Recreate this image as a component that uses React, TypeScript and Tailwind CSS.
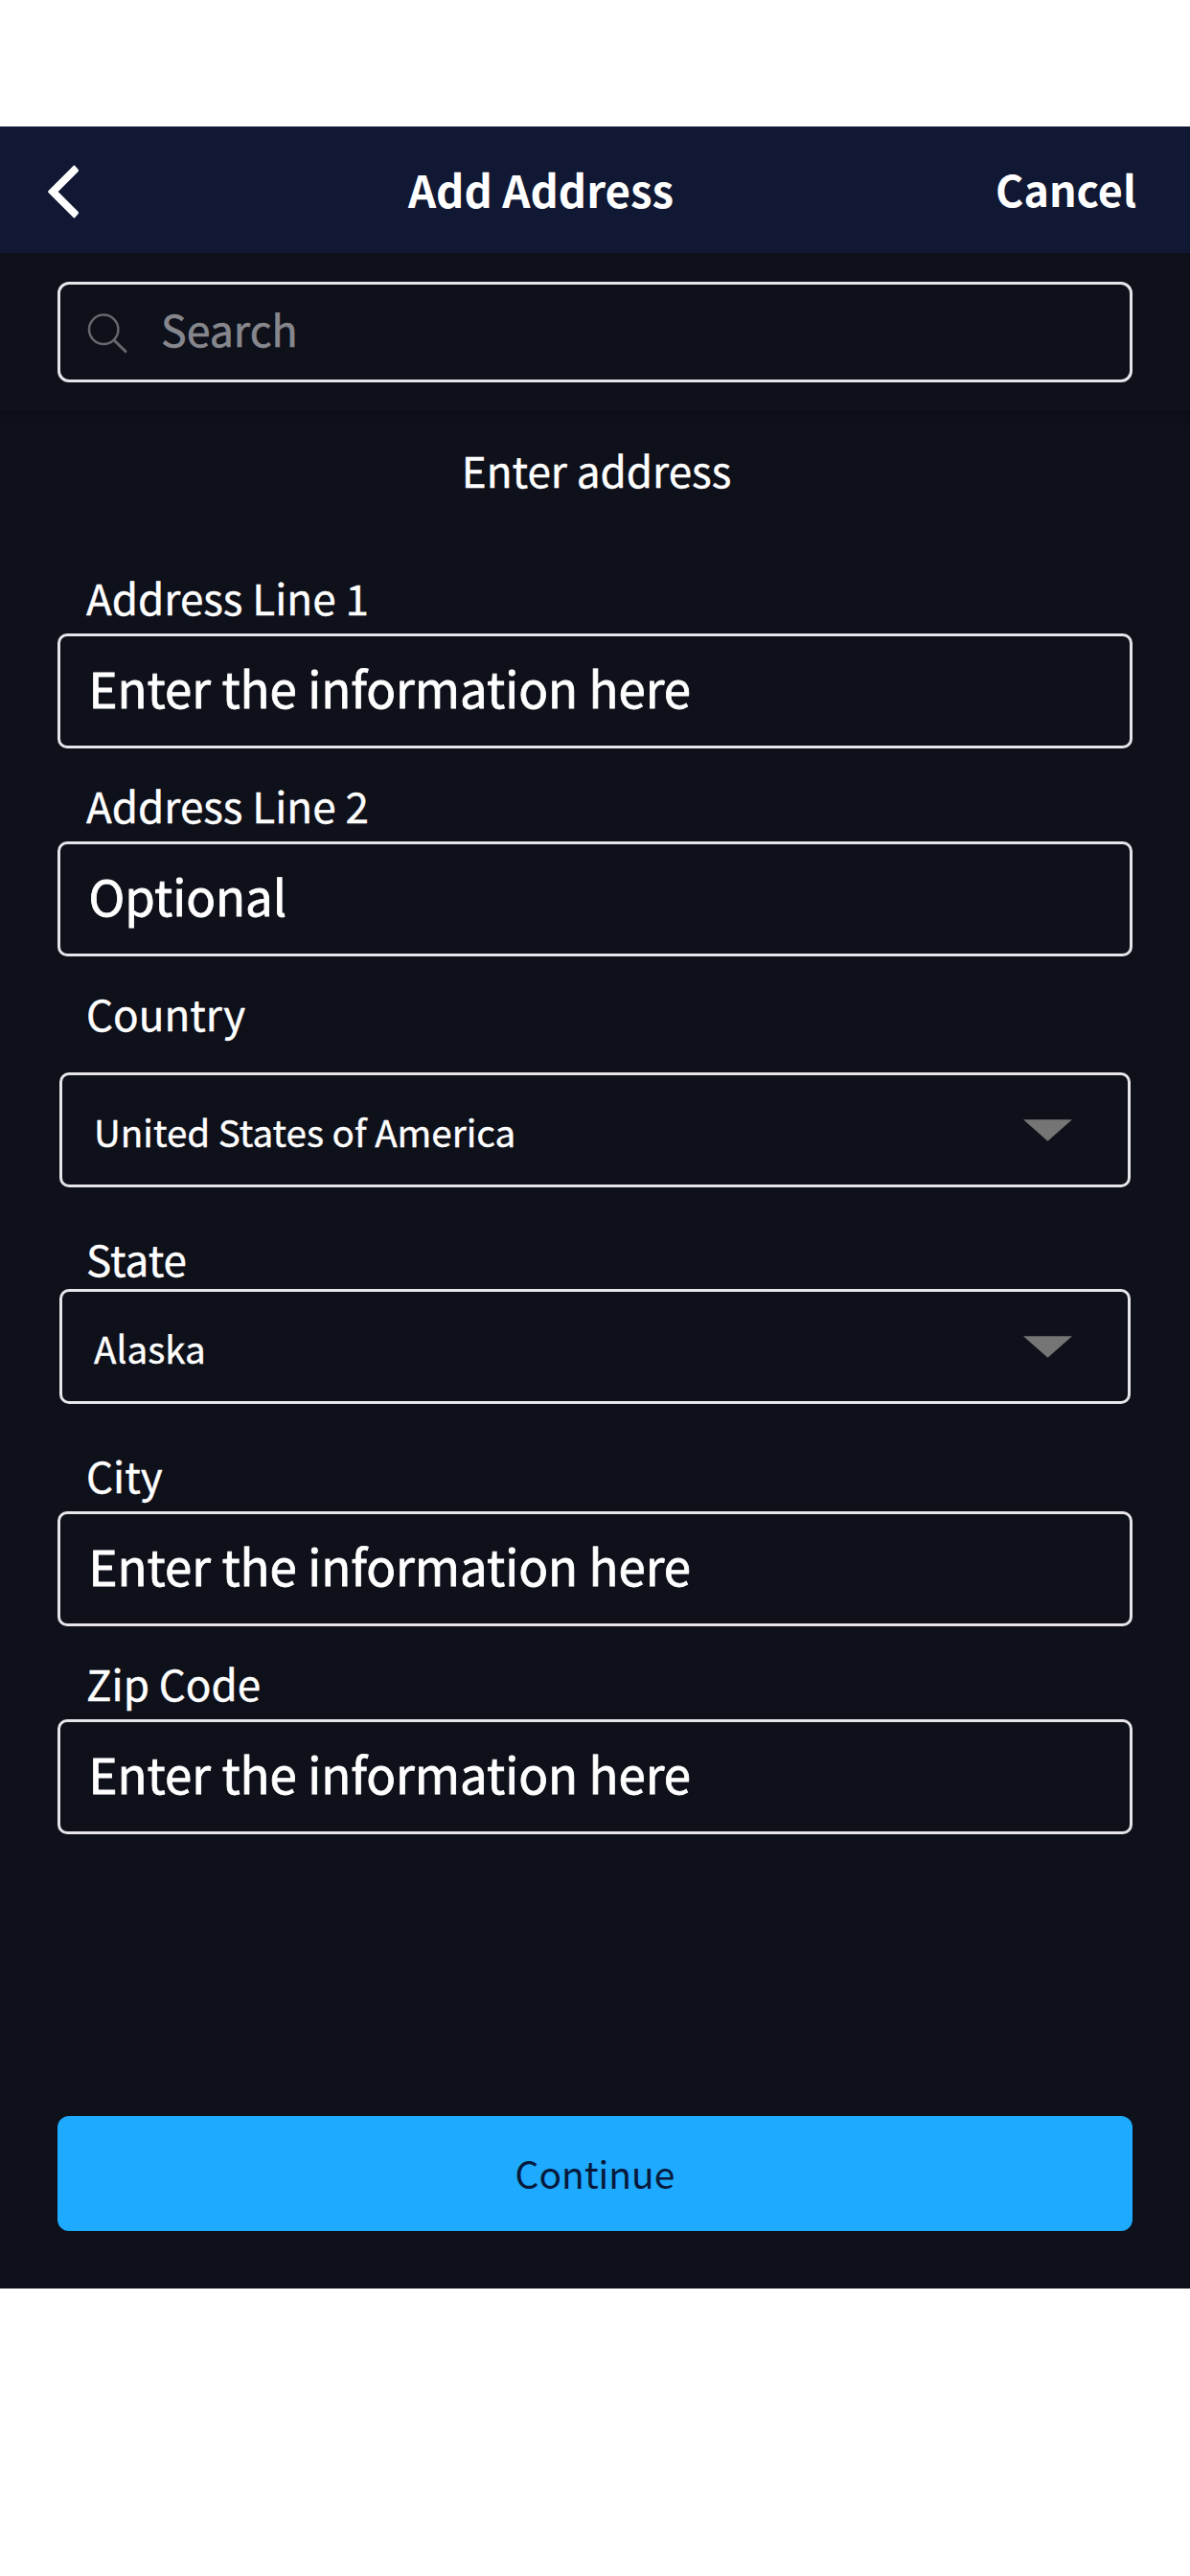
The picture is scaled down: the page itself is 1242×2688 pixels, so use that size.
import React from 'react';

function BackIcon() {
  return (
    <svg width="34" height="56" viewBox="0 0 34 56" className="block">
      <path
        d="M2.6 28 L28.4 2.2 L31.6 6 L9.6 28 L31.6 50 L28.4 53.8 Z"
        fill="#fff"
        stroke="#fff"
        strokeWidth="3"
        strokeLinejoin="round"
      />
    </svg>
  );
}

function SearchIcon() {
  return (
    <svg width="44" height="48" viewBox="0 0 44 48" fill="none" stroke="#66676c" className="block">
      <circle cx="18.2" cy="19.8" r="15.2" strokeWidth="2.5" />
      <path d="M29 31 L41 42.6" strokeWidth="3" strokeLinecap="round" />
    </svg>
  );
}

function Caret() {
  return (
    <svg width="51" height="23" viewBox="0 0 51 23" className="block">
      <path d="M0 0.3 H51 L25.5 22.8 Z" fill="#757575" />
    </svg>
  );
}

function Label({ children }: { children: React.ReactNode }) {
  return (
    <label className="block pl-[30px] text-[44px] leading-[64px] text-white [-webkit-text-stroke:0.4px_#fff]">
      {children}
    </label>
  );
}

function TextField({ label, text }: { label: string; text: string }) {
  return (
    <div>
      <Label>{label}</Label>
      <div className="mt-1.5 h-[120px] rounded-[10px] border-[3px] border-[#e6e6ea] pt-4 pl-[29.5px] text-[51px] leading-[74px] tracking-[-0.03px] text-white [-webkit-text-stroke:0.8px_#fff]">
        {text}
      </div>
    </div>
  );
}

function SelectBox({ value }: { value: string }) {
  return (
    <div className="mx-0.5 flex h-[120px] items-start justify-between rounded-[10px] border-[3px] border-[#e6e6ea] pr-[58px] pl-[33px] text-white">
      <span className="pt-[30px] text-[38.6px] leading-[56px] [-webkit-text-stroke:0.4px_#fff]">{value}</span>
      <span className="pt-[46px]">
        <Caret />
      </span>
    </div>
  );
}

export default function App() {
  return (
    <div className="min-h-[2688px] w-[1242px] bg-white pt-[132px] font-['Noto_Sans_CJK_JP','Noto_Sans',sans-serif]">
      <div className="h-[2256px] bg-[#0e101a]">
        <header className="grid h-[132px] grid-cols-[1fr_auto_1fr] items-start bg-[#101833] text-white">
          <button className="justify-self-start pt-10 pl-[49px]">
            <BackIcon />
          </button>
          <h1 className="mr-[113px] pt-8 text-[45.6px] leading-[66px] font-bold">Add Address</h1>
          <button className="mr-[56px] justify-self-end pt-8 text-[44.8px] leading-[65px] font-bold">Cancel</button>
        </header>

        <div className="h-[164px] px-[60px] pt-[30px]">
          <div className="flex h-[105px] items-start rounded-[12px] border-[3px] border-[#e6e6ea]">
            <span className="pt-[27px] pl-[27px]">
              <SearchIcon />
            </span>
            <span className="pt-[13px] pl-[34px] text-[44.7px] leading-[65px] text-[#86878d] [-webkit-text-stroke:0.6px_#86878d]">
              Search
            </span>
          </div>
        </div>

        <main className="bg-linear-to-b from-[#0c0e17] to-[#0e101a] to-[24px] px-[60px] pt-[30px]">
          <h2 className="pl-[3px] text-center text-[44px] leading-[64px] text-white [-webkit-text-stroke:0.4px_#fff]">
            Enter address
          </h2>

          <form className="pt-[69px]">
            <div className="flex flex-col gap-[27px]">
              <TextField label="Address Line 1" text="Enter the information here" />
              <TextField label="Address Line 2" text="Optional" />
              <div className="flex flex-col gap-[30px]">
                <Label>Country</Label>
                <SelectBox value="United States of America" />
              </div>
            </div>
            <div className="pt-[42px]">
              <Label>State</Label>
              <SelectBox value="Alaska" />
            </div>
            <div className="flex flex-col gap-[27px] pt-[42px]">
              <TextField label="City" text="Enter the information here" />
              <TextField label="Zip Code" text="Enter the information here" />
            </div>
            <button
              type="button"
              className="mt-[294px] flex h-[120px] w-full items-start justify-center rounded-[12px] bg-[#1eaaff] pt-[31px] text-[39px] leading-[56px] text-[#071a3c]"
            >
              Continue
            </button>
          </form>
        </main>
      </div>
    </div>
  );
}
